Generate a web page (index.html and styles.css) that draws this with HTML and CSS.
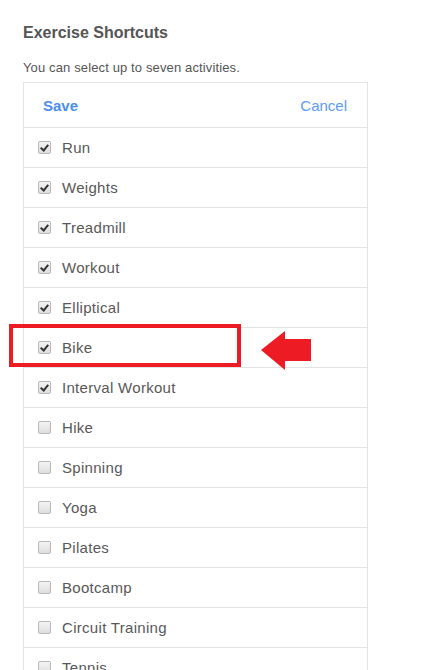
FILE: index.html
```html
<!DOCTYPE html>
<html>
<head>
<meta charset="utf-8">
<link rel="stylesheet" href="styles.css">
</head>
<body>
<div class="page">
  <h1 class="title">Exercise Shortcuts</h1>
  <p class="subtitle">You can select up to seven activities.</p>
  <div class="panel">
    <div class="panel-head">
      <span class="save">Save</span>
      <span class="cancel">Cancel</span>
    </div>
    <ul class="list">
      <li class="row"><span class="cb checked"></span><span>Run</span></li>
      <li class="row"><span class="cb checked"></span><span>Weights</span></li>
      <li class="row"><span class="cb checked"></span><span>Treadmill</span></li>
      <li class="row"><span class="cb checked"></span><span>Workout</span></li>
      <li class="row"><span class="cb checked"></span><span>Elliptical</span></li>
      <li class="row highlight-row"><span class="cb checked"></span><span>Bike</span>
        <div class="highlight"></div>
        <svg class="arrow" width="52" height="40" viewBox="0 0 52 40"><polygon points="0,19 24,0 24,8 50,8 50,30 24,30 24,39" fill="#ed1c24"/></svg>
      </li>
      <li class="row"><span class="cb checked"></span><span>Interval Workout</span></li>
      <li class="row"><span class="cb"></span><span>Hike</span></li>
      <li class="row"><span class="cb"></span><span>Spinning</span></li>
      <li class="row"><span class="cb"></span><span>Yoga</span></li>
      <li class="row"><span class="cb"></span><span>Pilates</span></li>
      <li class="row"><span class="cb"></span><span>Bootcamp</span></li>
      <li class="row"><span class="cb"></span><span>Circuit Training</span></li>
      <li class="row"><span class="cb"></span><span>Tennis</span></li>
      <li class="row"><span class="cb"></span><span>Swimming</span></li>
    </ul>
  </div>
</div>
</body>
</html>
```
FILE: styles.css
```css
html, body {
  margin: 0;
  padding: 0;
  background: #fff;
}
body {
  font-family: "Liberation Sans", Arial, sans-serif;
  color: #555;
}
.page {
  padding: 23px 0 0 23px;
  width: 345px;
}
.title {
  margin: 0;
  font-size: 16px;
  line-height: 20px;
  font-weight: bold;
  color: #555;
}
.subtitle {
  margin: 17px 0 0;
  font-size: 13px;
  line-height: 16px;
  letter-spacing: 0.13px;
  color: #555;
}
.panel {
  margin-top: 6px;
  border: 1px solid #e3e3e3;
  border-bottom: none;
}
.panel-head {
  height: 44px;
  display: flex;
  align-items: center;
  justify-content: space-between;
  padding: 0 20px 0 19px;
  font-size: 15px;
}
.save {
  font-weight: bold;
  color: #4a8ef0;
}
.cancel {
  color: #5c9cf2;
}
.list {
  list-style: none;
  margin: 0;
  padding: 0;
}
.row {
  height: 39px;
  border-top: 1px solid #e3e3e3;
  display: flex;
  align-items: center;
  padding-left: 14px;
  font-size: 15px;
  letter-spacing: 0.3px;
  color: #585858;
}
.cb {
  width: 11px;
  height: 11px;
  border: 1px solid #b9b9b9;
  border-radius: 2px;
  background: linear-gradient(#f4f4f4, #dedede);
  margin-right: 11px;
  position: relative;
  flex: none;
}
.cb.checked::after {
  content: "";
  position: absolute;
  left: 3px;
  top: 1px;
  width: 3px;
  height: 6px;
  border: solid #333;
  border-width: 0 2px 2px 0;
  transform: rotate(40deg);
}
.highlight-row {
  position: relative;
}
.highlight {
  position: absolute;
  left: -15px;
  top: -4px;
  width: 224px;
  height: 35px;
  border: 4px solid #ed1c24;
}
.arrow {
  position: absolute;
  left: 237px;
  top: 3px;
}
```
